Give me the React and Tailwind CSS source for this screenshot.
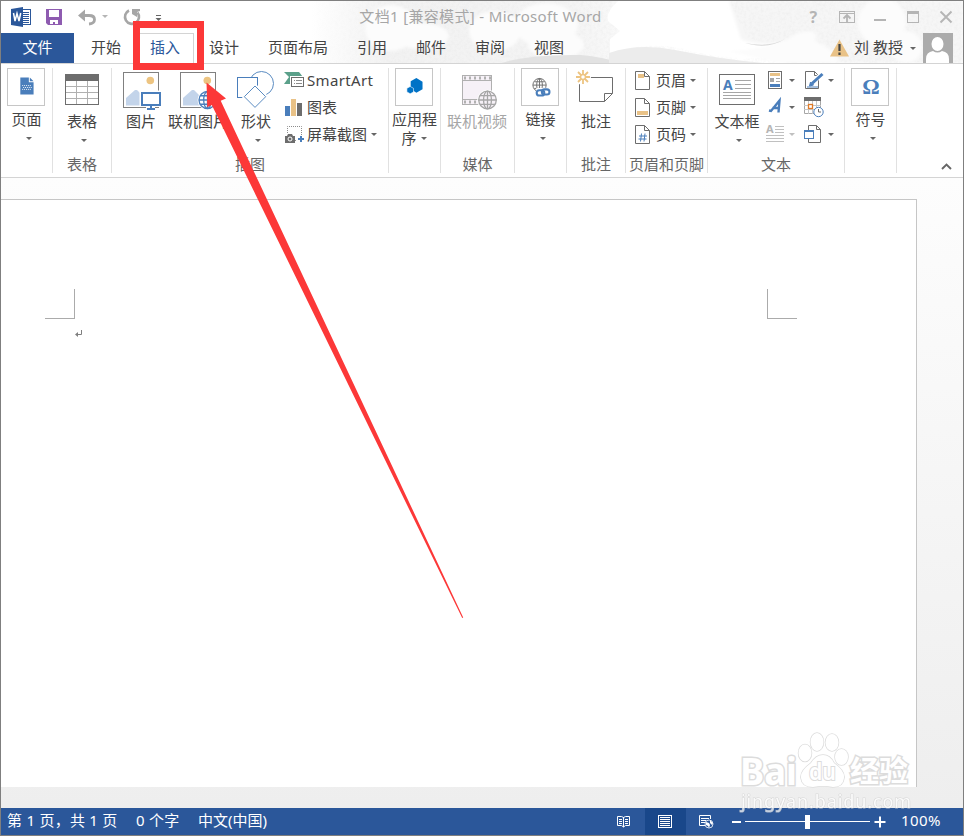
const TABS = ["设计", "页面布局", "引用", "邮件", "审阅", "视图"];

function Caret({ className = "text-[#666]" }) {
  return (
    <svg className={`shrink-0 ${className}`} width="6" height="3" viewBox="0 0 6 3">
      <path d="M0 0h6L3 3z" fill="currentColor" />
    </svg>
  );
}

/* Ribbon building blocks */
function Group({ label, className, children }) {
  return (
    <div className={`flex h-[105px] shrink-0 flex-col border-r border-[#e1e1e1] ${className}`}>
      <div className="flex h-[86px] shrink-0">{children}</div>
      <div className="shrink-0 text-center leading-[21px] whitespace-nowrap text-[#666]">{label}</div>
    </div>
  );
}

function BigButton({ icon, label, caret, className = "w-full" }) {
  return (
    <div className={`flex shrink-0 flex-col items-center ${className}`}>
      <svg width="44" height="43" viewBox="0 0 44 43" fill="none">{icon}</svg>
      <span className="leading-[20px] whitespace-nowrap">{label}</span>
      {caret && <Caret className="mt-[8px] ml-[4px] text-[#666]" />}
    </div>
  );
}

function FramedButton({ icon, label, second }) {
  return (
    <div className="flex w-[50px] flex-col items-center">
      <svg className="border border-[#c6c6c6]" width="38" height="38" viewBox="0 0 38 38" fill="none">{icon}</svg>
      <span className="mt-[3px] ml-px leading-[20px] whitespace-nowrap">{label}</span>
      {second ? (
        <span className="flex items-center gap-[4px] leading-[19px]">{second}<Caret /></span>
      ) : (
        <Caret className="mt-[8px] ml-[6px] text-[#666]" />
      )}
    </div>
  );
}

function SmallButton({ icon, label, caret, muted, tight }) {
  return (
    <div className="flex h-[27px] items-center">
      <svg className="shrink-0 overflow-visible" width="21" height="21" viewBox="0 0 21 21" fill="none">{icon}</svg>
      {label && <span className="ml-[2px] whitespace-nowrap">{label}</span>}
      {caret && !tight && <Caret className="ml-[4px] text-[#666]" />}
      {caret && tight && <Caret className={muted ? "ml-[2px] text-[#c0c0c0]" : "ml-[2px] text-[#666]"} />}
    </div>
  );
}

/* Icons */
function Globe({ cx, cy, r, color, fill = "#fff" }) {
  return (
    <g stroke={color} strokeWidth="1.300">
      <circle cx={cx} cy={cy} r={r + 1.5} fill="#fff" stroke="none" />
      <circle cx={cx} cy={cy} r={r} fill={fill} />
      <ellipse cx={cx} cy={cy} rx={r * 0.45} ry={r} />
      <path d={`M${cx - r} ${cy}h${2 * r}M${cx} ${cy - r}v${2 * r}M${cx - r * 0.85} ${cy - r / 2}h${r * 1.7}M${cx - r * 0.85} ${cy + r / 2}h${r * 1.7}`} />
    </g>
  );
}

const photo = (
  <>
    <rect x="4.5" y="4.5" width="35" height="35" stroke="#808080" fill="#fff" />
    <circle cx="31.300" cy="12.500" r="3.800" fill="#edc481" />
    <path d="M7 37.500V30l9-8h2l6 6v9.500z" fill="#c3d4ea" />
  </>
);

const pictureIcon = (
  <>
    {photo}
    <path d="M20.500 22.500H44V39h-8v4h-9v-5h-6.500z" fill="#fff" />
    <rect x="23" y="25" width="18" height="12" stroke="#4a7ebb" strokeWidth="2" />
    <path d="M32 38v3M28 41h8" stroke="#4a7ebb" strokeWidth="2" />
  </>
);

const onlinePictureIcon = (
  <>
    {photo}
    <Globe cx={31.5} cy={32} r={8.5} color="#4a7ebb" />
  </>
);

const tableIcon = (
  <>
    <path d="M5.500 18.500h33M5.500 24.500h33M5.500 30.500h33M16.500 13v23M27.500 13v23" stroke="#b0b0b0" />
    <rect x="5.500" y="6.500" width="33" height="30" stroke="#6d6d6d" />
    <path d="M5 6h34v7H5z" fill="#6d6d6d" />
  </>
);

const shapesIcon = (
  <g stroke="#5b8cc2">
    <circle cx="27.500" cy="15.500" r="12" />
    <rect x="3.500" y="9.500" width="20" height="20" fill="#fff" stroke="#4a7ebb" />
    <path d="M21 18l10.700 10.700L21 39.400 10.300 28.700z" fill="#fff" stroke="#fff" strokeWidth="4" />
    <path d="M21 18l10.700 10.700L21 39.400 10.300 28.700z" />
  </g>
);

const videoIcon = (
  <>
    <rect x="7.500" y="7.500" width="29" height="29" fill="#f6f1f7" stroke="#b0b0b0" />
    <path d="M8 12.500h28M8 31.500h28" stroke="#b0b0b0" />
    <path d="M9 10h27M9 34h27" stroke="#b0b0b0" strokeWidth="3" strokeDasharray="2 3" />
    <Globe cx={32.5} cy={32} r={8.8} color="#a6a6a6" fill="#f6f1f7" />
  </>
);

const commentIcon = (
  <>
    <path d="M5.500 9.500h33v16l-8 8h-25z" fill="#fff" stroke="#6d6d6d" />
    <path d="M38.500 25.500h-8v8" stroke="#6d6d6d" />
    <circle cx="9" cy="9" r="8" fill="#fff" />
    <circle cx="9" cy="9" r="2.500" stroke="#edc481" strokeWidth="1.500" />
    <path d="M9 2v4M9 12v4M2 9h4M12 9h4M4 4l3 3M11 11l3 3M14 4l-3 3M7 11l-3 3" stroke="#edc481" strokeWidth="1.800" />
  </>
);

const textBoxIcon = (
  <>
    <rect x="4.500" y="6.500" width="35" height="30" stroke="#6d6d6d" />
    <text x="8" y="22" fontSize="14" fontWeight="700" fill="#4a7ebb">A</text>
    <path d="M20 12.500h16M20 16.500h16M20 20.500h16M8 24.500h28M8 27.500h28M8 30.500h28" stroke="#a6a6a6" />
  </>
);

const pageIcon = (
  <g transform="translate(1 0)">
    <path d="M12 9h9v5h5v13H12z" fill="#4a7ebb" />
    <path d="M22 9l4 4h-4z" fill="#4a7ebb" />
    <path d="M14 17.500h10M15 19.500h10M14 21.500h10" stroke="#fff" strokeDasharray="1 1" />
  </g>
);

const appsIcon = (
  <g fill="#0072c6" transform="translate(1 1)">
    <path d="M20.500 8.500l6.500 4v8l-6.500 3.500-6-4v-8z" />
    <path d="M14 17.500l3.500 1.900v3.800L14 25.100l-3.500-1.900v-3.800z" stroke="#fff" strokeWidth="0.600" />
  </g>
);

const linkIcon = (
  <g transform="translate(1 1)">
    <g stroke="#6d6d6d">
      <circle cx="17.500" cy="16" r="7" />
      <ellipse cx="17.500" cy="16" rx="3" ry="7" />
      <path d="M10.500 16h14M12 12.500h11M12 19.500h11M17.500 9v14" />
    </g>
    <path d="M14 19h15v9H14z" fill="#fff" />
    <g stroke="#4a7ebb" strokeWidth="2.200">
      <rect x="14.500" y="21.500" width="8" height="5.500" rx="2.700" />
      <rect x="20" y="20.500" width="8" height="5.500" rx="2.700" />
    </g>
  </g>
);

const symbolIcon = (
  <text x="20" y="26" textAnchor="middle" fontSize="23" fontWeight="700" fill="#4a7ebb" fontFamily="Liberation Serif">Ω</text>
);

const sheet = <path d="M3.500 2.500h9l5 5v13h-14zM12.500 2.500v5h5" transform="translate(-1 -1)" stroke="#6d6d6d" fill="#fff" />;

const smartArtIcon = (
  <>
    <path d="M0 2h15l4 5H5z" fill="#5ba08a" />
    <path d="M0 14l5-7h5v7z" fill="#5ba08a" />
    <path d="M6 6h15v12H6z" fill="#fff" />
    <rect x="7.500" y="7.500" width="12" height="9" stroke="#6d6d6d" fill="#fff" />
    <path d="M10 10.500h1M10 13.500h1M12 10.500h6M12 13.500h6" stroke="#8c8c8c" />
  </>
);

const chartIcon = (
  <>
    <path d="M1 9h5v10H1z" fill="#4a7ebb" />
    <path d="M7 2h5v17H7z" fill="#e9c287" />
    <path d="M13 6h5v13h-5z" fill="#6d6d6d" />
  </>
);

const screenshotIcon = (
  <>
    <path d="M3.500 9V2.500h14V12M11 16.500h2" stroke="#8c8c8c" strokeDasharray="1 1" />
    <path d="M1 12h2l1-2h4l1 2h2v7H1z" fill="#6d6d6d" />
    <circle cx="6" cy="15" r="2" stroke="#fff" />
    <path d="M17 12v6M14 15h6" stroke="#4a7ebb" strokeWidth="2" />
  </>
);

const headerIcon = <>{sheet}<path d="M5 4h6v4H5z" fill="#e9c287" /></>;
const footerIcon = <>{sheet}<path d="M4 14h11v4H4z" fill="#e9c287" /></>;
const pageNumIcon = <>{sheet}<path d="M8.500 9.500l-1 8M12 9.500l-1 8M6 12h8M5.500 15h8" stroke="#4a7ebb" /></>;

const quickPartsIcon = (
  <>
    <rect x="2.500" y="1.500" width="13" height="17" stroke="#6d6d6d" />
    <path d="M4 3h10v3H4z" fill="#e9c287" />
    <path d="M4 8h4v4H4z" fill="#a6a6a6" />
    <path d="M10 8.500h4M10 11.500h4" stroke="#a6a6a6" />
    <path d="M4 14h10v3H4z" fill="#4a7ebb" />
  </>
);

const wordArtIcon = (
  <path d="M3 13.500l2 .5 8.500-10.500-1 12M6.500 11h6" stroke="#4a7ebb" strokeWidth="2.400" />
);

const dropCapIcon = (
  <>
    <text x="0" y="9" fontSize="11" fontWeight="700" fill="#b5b5b5">A</text>
    <path d="M9 2.500h9M9 5.500h9M9 8.500h9M0 11.500h18M0 14.500h18M0 17.500h18" stroke="#c0c0c0" />
  </>
);

const signatureIcon = (
  <>
    <path d="M2.500 1.500h9l4 4v13h-13z" stroke="#6d6d6d" />
    <path d="M11.500 1.500v4h4" stroke="#6d6d6d" />
    <path d="M9 13l10-9" stroke="#fff" strokeWidth="5" />
    <path d="M9 13.500L19.500 4" stroke="#4a7ebb" strokeWidth="3" />
    <path d="M7.500 12l3 3-4 1zM4 17h11" stroke="#4a7ebb" fill="#4a7ebb" />
  </>
);

const dateIcon = (
  <>
    <path d="M1.500 1.500h16v15h-16z" stroke="#a6a6a6" />
    <path d="M1 8.500h17M1 12.500h17M5.500 4v13M13.500 4v13M9.500 4v13" stroke="#c6c6c6" />
    <path d="M1 0h17v4H1z" fill="#6d6d6d" />
    <rect x="5.500" y="7.500" width="4" height="4" stroke="#e07b28" fill="#fff" strokeWidth="1.300" />
    <circle cx="15.500" cy="15" r="4.700" fill="#fff" stroke="#4a7ebb" />
    <path d="M15.500 12v3h2.500" stroke="#6d6d6d" />
  </>
);

const objectIcon = (
  <>
    <path d="M5.500 1.500h8l4 4v13h-12zM13.500 1.500v4h4" stroke="#6d6d6d" />
    <rect x="1.500" y="6.500" width="9" height="8" fill="#fff" stroke="#4a7ebb" />
    <path d="M1 7h10" stroke="#4a7ebb" strokeWidth="2" />
  </>
);

/* Grainy drawing behind the title bar and tabs */
function HeaderArt() {
  return (
    <svg className="absolute inset-0" width="962" height="62" viewBox="0 0 962 62">
      <defs>
        <filter id="grain" x="0" y="0" width="100%" height="100%">
          <feTurbulence type="fractalNoise" baseFrequency="0.350" numOctaves="3" />
          <feColorMatrix values="0 0 0 0 0.75  0 0 0 0 0.75  0 0 0 0 0.75  0 0 0 1.2 -0.45" />
        </filter>
        <filter id="soft" x="-5%" y="-20%" width="110%" height="140%">
          <feGaussianBlur stdDeviation="1.500" />
        </filter>
        <linearGradient id="fade">
          <stop offset="0" stopColor="#f2f2f2" stopOpacity="0" />
          <stop offset="0.250" stopColor="#f2f2f2" />
          <stop offset="0.850" stopColor="#f4f4f4" />
          <stop offset="1" stopColor="#f9f9f9" />
        </linearGradient>
        <linearGradient id="grainFade">
          <stop offset="0" stopColor="#000" />
          <stop offset="0.140" stopColor="#fff" />
        </linearGradient>
        <mask id="artMask">
          <path d="M310 0H617Q604 12 607 20l12 10-10 8v24H310zM728 0h234v62H610V52q40-14 80-2 50 12 90 4 18-2 30-10l-4-4q-40 6-60-4z" fill="url(#grainFade)" />
        </mask>
      </defs>
      <path d="M310 0H617Q604 12 607 20l12 10-10 8v24H310z" fill="url(#fade)" />
      <path d="M728 0h234v62H790q-20-10 10-24-40 10-60 0z" fill="#f6f6f6" filter="url(#soft)" />
      <g mask="url(#artMask)" opacity="0.450">
        <rect x="310" width="652" height="62" filter="url(#grain)" />
      </g>
      <g fill="#fcfcfc" filter="url(#soft)">
        <ellipse cx="390" cy="27" rx="26" ry="23" />
        <ellipse cx="420" cy="35" rx="28" ry="13" />
        <ellipse cx="494" cy="30" rx="26" ry="20" />
        <ellipse cx="545" cy="24" rx="32" ry="22" />
        <ellipse cx="555" cy="44" rx="28" ry="14" />
        <path d="M726 50q50-2 70-18 24-6 18 8 20 8 24 22H780z" />
        <circle cx="881" cy="21" r="24" />
        <circle cx="905" cy="46" r="16" />
      </g>
      <path d="M500 62q30-9 80-8 22 2 40 8z" fill="#e2e2e2" />
      <path d="M608 52q30-10 66-3 50 10 90 13H608z" fill="#ececec" />
      <path d="M744 42q24 5 40-4-16 10-36 5z" fill="#d6d6d6" />
    </svg>
  );
}

function TitleBar() {
  return (
    <div className="relative flex h-[32px] items-center text-[#a6a6a6]">
      <div className="flex w-[176px] items-center">
        <svg width="176" height="32" viewBox="1 1 176 32" fill="none">
          <rect x="21.500" y="9.500" width="9" height="15" fill="#fff" stroke="#2b579a" />
          <path d="M23 12.500h6M23 14.500h6M23 16.500h6M23 18.500h6M23 20.500h6M23 22.500h6" stroke="#2b579a" />
          <path d="M11 9l12-2v20l-12-2z" fill="#2b579a" />
          <path d="M13.500 13l1.500 8 2-7.500 2 7.500 1.700-8" stroke="#fff" strokeWidth="1.500" />
          <path d="M46 9h16v16H48l-2-2z" fill="#8e5bb0" />
          <path d="M49 10h10v7H49zM50 20h8v4h-3v-2h-2v2h-3z" fill="#fff" />
          <path d="M81 15.500h8q5.500 0 5.500 4t-5.500 4.500" stroke="#a6a6a6" strokeWidth="2.800" />
          <path d="M78 15.500l7-6v4l-1 2 1 2v4z" fill="#a6a6a6" />
          <path d="M102 15h6l-3 3z" fill="#b5b5b5" />
          <path d="M129 10.500a7 7 0 1 0 8.500 2" stroke="#a6a6a6" strokeWidth="2.600" />
          <path d="M132 9h8v2l-3 1v5l-5-3z" fill="#a6a6a6" />
          <path d="M156 15.500h5" stroke="#666" />
          <path d="M155.500 18h6l-3 3z" fill="#666" />
        </svg>
      </div>
      <div className="flex-1 pb-[2px] text-center tracking-[0.340px] whitespace-nowrap">文档1 [兼容模式] - Microsoft Word</div>
      <svg className="shrink-0" width="179" height="32" viewBox="784 1 179 32" fill="none" stroke="#b5b5b5">
        <text x="809.500" y="23" fontSize="16" fontWeight="700" fill="#b5b5b5" stroke="none">?</text>
        <rect x="839.500" y="11.500" width="15" height="11" />
        <path d="M840 13.500h15" />
        <path d="M847 22v-6M843.500 18.500l3.500-3.500 3.500 3.500" strokeWidth="1.800" />
        <path d="M874 20h12" strokeWidth="2" />
        <rect x="907.500" y="11.500" width="11" height="11" />
        <path d="M907 12.500h12" strokeWidth="3" />
        <path d="M940.500 11.500l11 11M951.500 11.500l-11 11" strokeWidth="1.900" />
      </svg>
    </div>
  );
}

function TabBar() {
  return (
    <div className="relative flex h-[30px] items-center leading-[26px]">
      <div className="h-[30px] w-[73px] shrink-0 bg-[#2b579a] text-center leading-[28px] text-white">文件</div>
      <div className="w-[65px] shrink-0 pb-[2px] pl-[17px]">开始</div>
      <div className="relative h-[30px] w-[55px] shrink-0 border border-b-0 border-[#d4d4d4] bg-white pl-[10px] text-[#2b579a]">插入</div>
      <div className="ml-[15px] flex flex-1 gap-[29px] pb-[2px]">
        {TABS.map((tab) => <span key={tab}>{tab}</span>)}
      </div>
      <div className="flex items-center pr-[10px]">
        <svg width="20" height="18" viewBox="0 0 20 18">
          <path d="M9.500 0.500l9.500 17H0z" fill="#e9c287" />
          <path d="M9.500 5v7M9.500 13.500v2.500" stroke="#444" strokeWidth="2.200" />
        </svg>
        <span className="mb-[3px] ml-[4px] whitespace-nowrap">刘 教授</span>
        <Caret className="mr-[7px] ml-[7px] text-[#666]" />
        <svg width="30" height="30" viewBox="0 0 30 30">
          <path d="M0 0h30v30H0z" fill="#ababab" />
          <ellipse cx="14.500" cy="11" rx="6" ry="7" fill="#fff" />
          <path d="M3 30v-4q0-7 7-8 4.500 3 9 0 7 1 7 8v4z" fill="#fff" />
        </svg>
      </div>
    </div>
  );
}

function Ribbon() {
  return (
    <div className="flex h-[115px] shrink-0 border-t border-b border-[#d4d4d4] bg-white pt-[4px]">
      <Group className="w-[52px]"><FramedButton icon={pageIcon} label="页面" /></Group>
      <Group className="w-[59px]" label="表格"><BigButton icon={tableIcon} label="表格" caret /></Group>
      <Group className="w-[277px]" label="插图">
        <BigButton className="ml-[2px] w-[54px]" icon={pictureIcon} label="图片" />
        <BigButton className="w-[60px]" icon={onlinePictureIcon} label="联机图片" />
        <BigButton className="w-[56px]" icon={shapesIcon} label="形状" caret />
        <div className="-mt-px flex flex-col">
          <SmallButton icon={smartArtIcon} label={<span className="tracking-[0.350px]">SmartArt</span>} />
          <SmallButton icon={chartIcon} label="图表" />
          <SmallButton icon={screenshotIcon} label="屏幕截图" caret />
        </div>
      </Group>
      <Group className="w-[52px]"><FramedButton icon={appsIcon} label="应用程" second="序" /></Group>
      <Group className="w-[74px]" label="媒体">
        <BigButton className="w-[72px] text-[#a6a6a6]" icon={videoIcon} label="联机视频" />
      </Group>
      <Group className="w-[52px]"><FramedButton icon={linkIcon} label="链接" /></Group>
      <Group className="w-[59px]" label="批注"><BigButton icon={commentIcon} label="批注" /></Group>
      <Group className="w-[82px]" label="页眉和页脚">
        <div className="-mt-px flex flex-col pl-[7px]">
          <SmallButton icon={headerIcon} label="页眉" caret />
          <SmallButton icon={footerIcon} label="页脚" caret />
          <SmallButton icon={pageNumIcon} label="页码" caret />
        </div>
      </Group>
      <Group className="w-[137px]" label="文本">
        <BigButton className="w-[58px]" icon={textBoxIcon} label="文本框" caret />
        <div className="-mt-px flex flex-col">
          <SmallButton icon={quickPartsIcon} caret tight />
          <SmallButton icon={wordArtIcon} caret tight />
          <SmallButton icon={dropCapIcon} caret tight muted />
        </div>
        <div className="-mt-px ml-[8px] flex flex-col">
          <SmallButton icon={signatureIcon} caret />
          <SmallButton icon={dateIcon} />
          <SmallButton icon={objectIcon} caret />
        </div>
      </Group>
      <Group className="w-[52px]"><FramedButton icon={symbolIcon} label="符号" /></Group>
      <div className="flex flex-1 items-end justify-end pr-[11px] pb-[7px]">
        <svg width="11" height="7" viewBox="0 0 11 7" fill="none">
          <path d="M1 6l4.500-4.500L10 6" stroke="#666" strokeWidth="1.900" />
        </svg>
      </div>
    </div>
  );
}

function Document() {
  return (
    <div className="h-[630px] shrink-0 bg-linear-to-b from-[#fdfdfd] to-[#eeeeee] pt-[21px]">
      <div className="h-[588px] w-[916px] border-t border-r border-[#c6c6c6] bg-white pt-[89px]">
        <div className="flex justify-between pr-[119px] pl-[44px]">
          <div className="h-[30px] w-[30px] border-r border-b border-[#ababab]" />
          <div className="h-[30px] w-[30px] border-b border-l border-[#ababab]" />
        </div>
        <svg className="mt-[11px] ml-[74px]" width="8" height="7" viewBox="0 0 8 7" fill="none">
          <path d="M6.500 0v4.500H1" stroke="#7f7f7f" />
          <path d="M0 4.500L3 2v5z" fill="#7f7f7f" />
        </svg>
      </div>
    </div>
  );
}

function StatusBar() {
  return (
    <div className="flex h-[27px] shrink-0 items-center bg-[#2b579a] leading-[25px] whitespace-nowrap text-white">
      <span className="w-[128px] pb-[2px] pl-[6px] tracking-[0.250px]">第 1 页，共 1 页</span>
      <span className="ml-[7px] w-[62px] pb-[2px] tracking-[0.250px]">0 个字</span>
      <span className="flex-1 pb-[2px]">中文(中国)</span>
      <svg width="14" height="13" viewBox="0 0 14 13" fill="none" stroke="#fff">
        <path d="M0.500 1.500h4l2 1 2-1h4v9h-4l-2 1.500-2-1.500h-4zM6.500 2v10" />
        <path d="M2 4.500h3M2 6.500h3M2 8.500h3M8 4.500h3M8 6.500h3M8 8.500h3" />
      </svg>
      <div className="ml-[14px] flex h-full w-[41px] items-center justify-center bg-[#19478a] pr-px">
        <svg width="14" height="13" viewBox="0 0 14 13" fill="none" stroke="#fff">
          <rect x="0.500" y="0.500" width="13" height="12" />
          <path d="M2 2.500h10M2 4.500h10M2 6.500h10M2 8.500h10M2 10.500h10" />
        </svg>
      </div>
      <svg className="ml-[13px]" width="15" height="14" viewBox="0 0 15 14" fill="none" stroke="#fff">
        <path d="M6 10.500H0.500v-10h11V4M2 3.500h8M2 5.500h5M2 7.500h4" />
        <circle cx="10" cy="9" r="4" fill="#2b579a" strokeWidth="0.800" />
        <path d="M7 7l3 1 1 2-1 3-1-2-2-1zM11 5l3 3-1 2-2-2z" fill="#fff" stroke="none" />
      </svg>
      <div className="ml-[18px] h-[2px] w-[9px] bg-white" />
      <div className="ml-[4px] flex h-[15px] w-[125px] items-center">
        <div className="h-px w-[60px] bg-white" />
        <div className="h-[14px] w-[5px] bg-white" />
        <div className="h-px flex-1 bg-white" />
      </div>
      <svg className="ml-[4px]" width="12" height="12" viewBox="0 0 12 12">
        <path d="M6 0.500v11M0.500 6h11" stroke="#fff" strokeWidth="2" />
      </svg>
      <span className="ml-[15px] w-[62px] pb-[2px] tracking-[0.400px]">100%</span>
    </div>
  );
}

function Watermark() {
  return (
    <svg className="absolute top-[724px] left-[729px]" width="200" height="94" viewBox="730 725 200 94">
      <g fill="#fff" stroke="#dcdcdc" strokeWidth="1.500" paintOrder="stroke">
        <g strokeWidth="3" fontWeight="700">
          <text x="740" y="785" fontSize="37" textLength="57" lengthAdjust="spacingAndGlyphs">Bai</text>
          <text x="850" y="782" fontSize="29" textLength="58">经验</text>
        </g>
        <ellipse cx="805" cy="753" rx="6.500" ry="8.500" />
        <ellipse cx="817" cy="742" rx="6.500" ry="9" />
        <ellipse cx="832" cy="742.500" rx="6.500" ry="8.500" />
        <ellipse cx="841.500" cy="757" rx="6.500" ry="8" />
        <path d="M823 755q7 0 11 8 11 8 10 15-1 9-11 9-10-2-20 0-11 0-12-9-1-7 10-15 5-8 12-8z" />
        <text x="809" y="780" fontSize="23" fontWeight="600" strokeWidth="2" textLength="27" lengthAdjust="spacingAndGlyphs">du</text>
      </g>
      <text x="741" y="808" fontSize="18" fill="#fff" stroke="#d0d0d0" strokeWidth="1.200" paintOrder="stroke" textLength="170" opacity="0.750">jingyan.baidu.com</text>
    </svg>
  );
}

export default function App() {
  return (
    <div className="relative flex h-[836px] w-[964px] flex-col overflow-hidden border border-[#7f7f7f] bg-white font-['Noto_Sans','Noto_Sans_CJK_SC',sans-serif] text-[15px] text-[#444]">
      <div className="relative h-[62px] shrink-0">
        <HeaderArt />
        <TitleBar />
        <TabBar />
      </div>
      <Ribbon />
      <Document />
      <StatusBar />
      <Watermark />

      {/* Callout frame and arrow */}
      <div className="absolute top-[20px] left-[132px] h-[49px] w-[71px] border-[7px] border-[#fc3838]" />
      <svg className="absolute top-[79px] left-[199px]" width="270" height="545" viewBox="200 80 270 545">
        <path d="M206.500 82.500L226 98.500l-5.300 2.200L463.200 617.500l-1 .5L211.800 105l-4.500 2.300z" fill="#fc3838" />
      </svg>
    </div>
  );
}
